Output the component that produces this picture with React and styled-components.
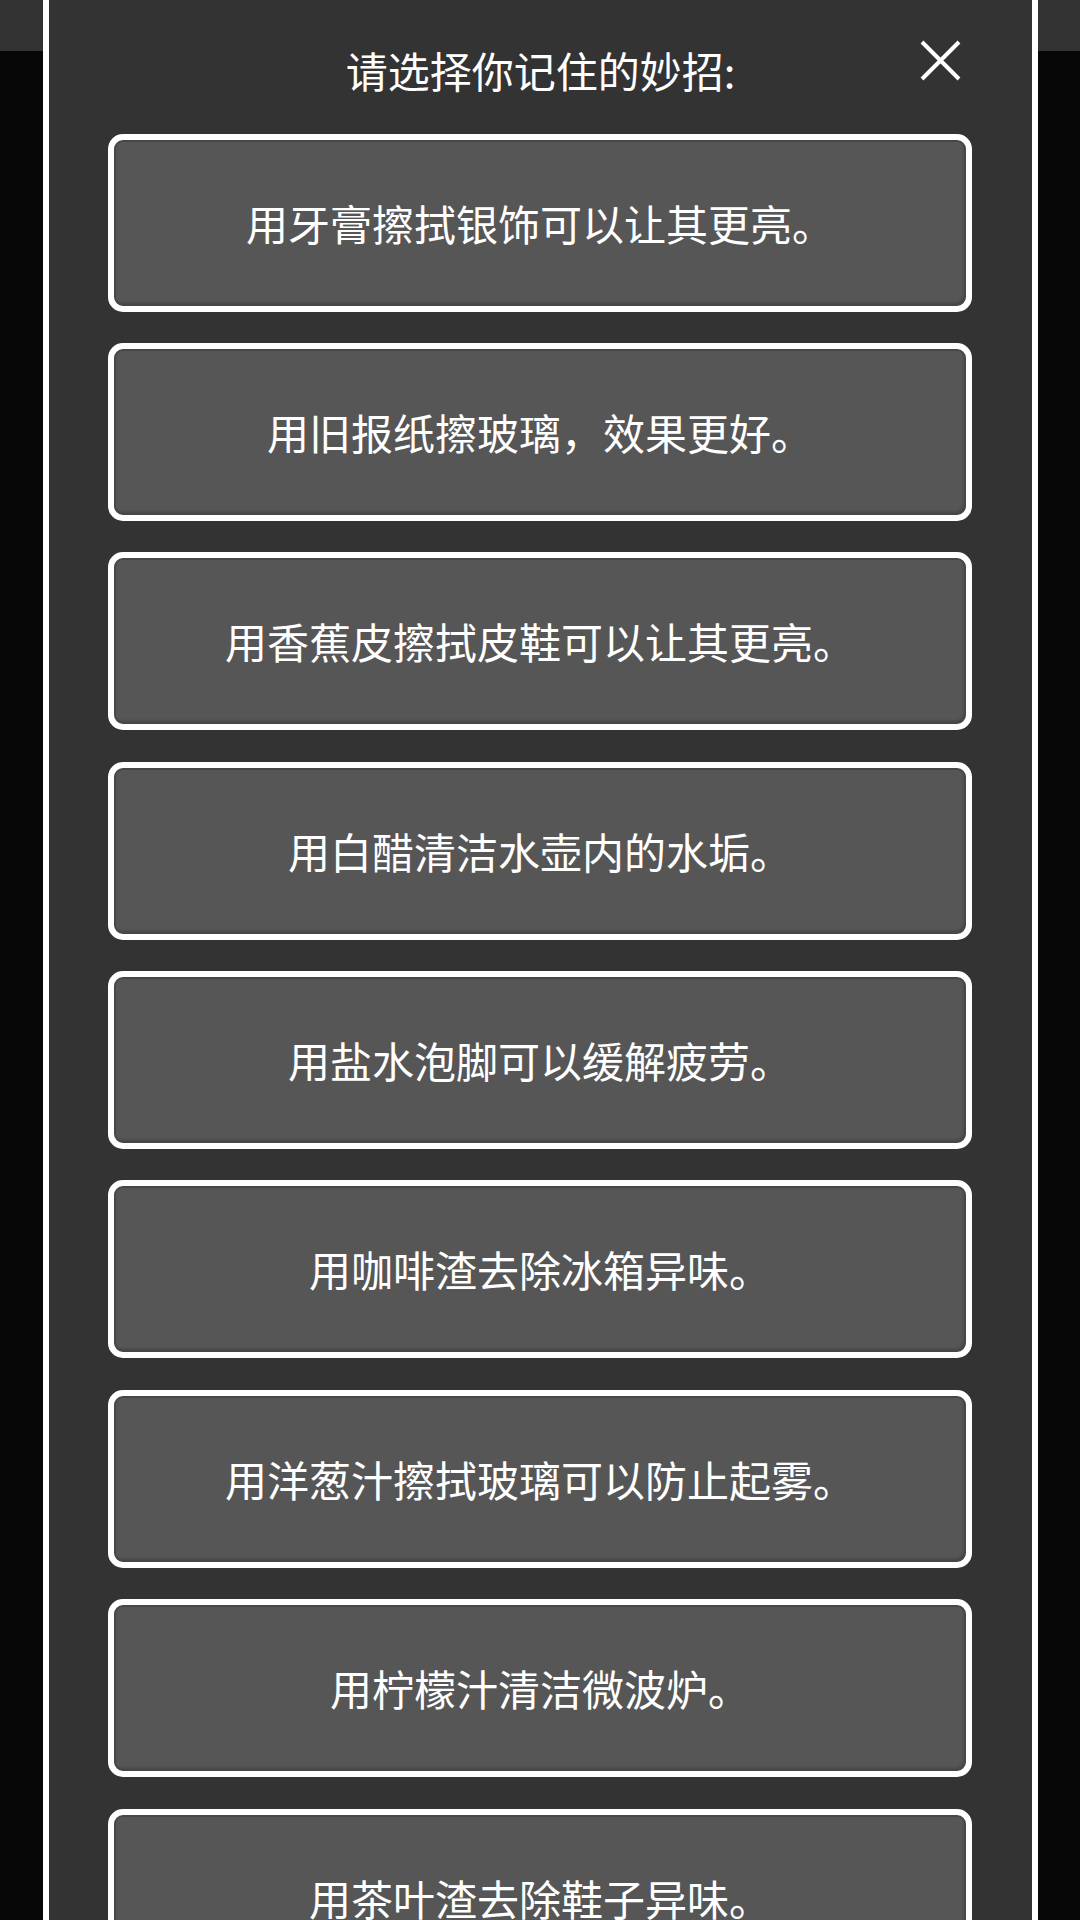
import React from 'react';
import styled, { createGlobalStyle } from 'styled-components';

const GlobalStyle = createGlobalStyle`
    html, body {
        margin: 0;
        padding: 0;
        background: #070707;
        font-family: "Noto Sans CJK SC", "Noto Sans", sans-serif;
    }
`

const Page = styled.div`
    position: relative;
    width: 1080px;
    height: 1920px;
    overflow: hidden;
    background: #070707;
`

const TopBar = styled.div`
    height: 51px;
    background: #333333;
`

const Modal = styled.div`
    position: absolute;
    top: -6px;
    left: 43px;
    width: 995px;
    bottom: -200px;
    box-sizing: border-box;
    border: 6px solid #ffffff;
    background: #333333;
    display: flex;
    flex-direction: column;
`

const Header = styled.div`
    position: relative;
    height: 102px;
    box-sizing: border-box;
    padding-top: 46px;
    text-align: center;
`

const Title = styled.h2`
    margin: 0;
    font-size: 42px;
    font-weight: 400;
    line-height: 48px;
    color: #ffffff;
`

const CloseButton = styled.button`
    position: absolute;
    top: 40px;
    right: 71px;
    width: 41px;
    height: 41px;
    padding: 0;
    border: none;
    background: transparent;
    cursor: pointer;
    display: flex;
`

const OptionList = styled.div`
    display: flex;
    flex-direction: column;
    gap: 31.4px;
    padding: 31.5px 60px 0 59px;
`

const Option = styled.button`
    height: 178px;
    width: 100%;
    box-sizing: border-box;
    border: 6px solid #ffffff;
    border-radius: 15px;
    background: #565656;
    box-shadow: inset 0 0 0 2px #474747, inset -2px -3px 3px rgba(0, 0, 0, 0.2);
    color: #ffffff;
    font-family: "Noto Sans CJK SC", "Noto Sans", sans-serif;
    font-size: 42px;
    font-weight: 400;
    line-height: 48px;
    display: flex;
    align-items: center;
    justify-content: center;
    padding: 0 20px;
`

const tips = [
    '用牙膏擦拭银饰可以让其更亮。',
    '用旧报纸擦玻璃，效果更好。',
    '用香蕉皮擦拭皮鞋可以让其更亮。',
    '用白醋清洁水壶内的水垢。',
    '用盐水泡脚可以缓解疲劳。',
    '用咖啡渣去除冰箱异味。',
    '用洋葱汁擦拭玻璃可以防止起雾。',
    '用柠檬汁清洁微波炉。',
    '用茶叶渣去除鞋子异味。',
]

const CloseIcon = () => (
    <svg width="41" height="41" viewBox="0 0 41 41">
        <path d="M2 2 L39 39 M39 2 L2 39" stroke="#ffffff" strokeWidth="4" fill="none" />
    </svg>
)

const App = () => {
    return (
        <Page>
            <GlobalStyle />
            <TopBar />
            <Modal>
                <Header>
                    <Title>请选择你记住的妙招:</Title>
                    <CloseButton aria-label="关闭">
                        <CloseIcon />
                    </CloseButton>
                </Header>
                <OptionList>
                    {tips.map((tip) => (
                        <Option key={tip}>{tip}</Option>
                    ))}
                </OptionList>
            </Modal>
        </Page>
    )
}

export default App;
